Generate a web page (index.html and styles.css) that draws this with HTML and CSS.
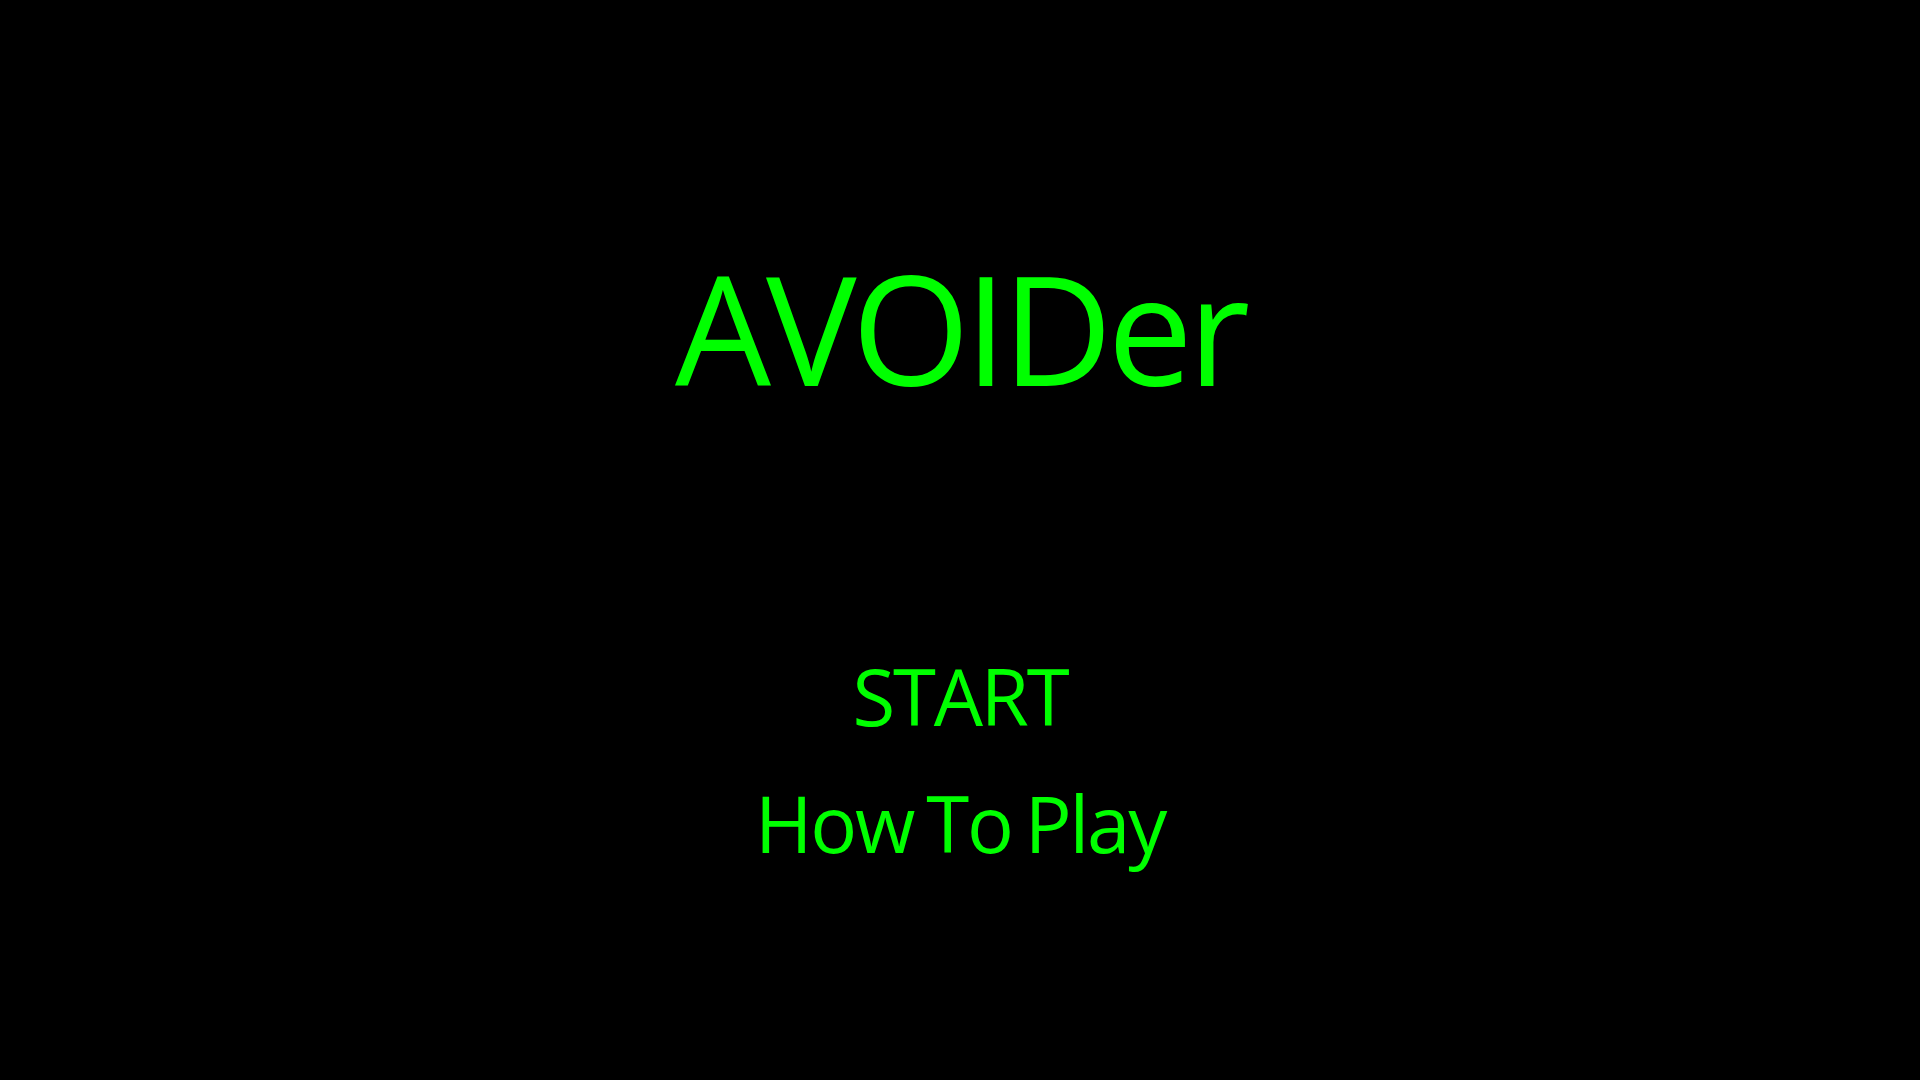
FILE: index.html
```html
<!DOCTYPE html>
<html lang="en">
<head>
<meta charset="utf-8">
<title>AVOIDer</title>
<link rel="stylesheet" href="styles.css">
</head>
<body>
<main class="screen">
  <h1 class="title">AVOIDer</h1>
  <nav class="menu">
    <div class="menu-item">START</div>
    <div class="menu-item">How To Play</div>
  </nav>
</main>
</body>
</html>
```

FILE: styles.css
```css
html, body {
  margin: 0;
  padding: 0;
  background: #000;
  height: 100%;
}
.screen {
  width: 1920px;
  height: 1080px;
  display: flex;
  flex-direction: column;
  align-items: center;
  font-family: "Open Sans", "Noto Sans", sans-serif;
  color: #00ff00;
}
.title {
  margin: 252px 0 0 0;
  font-size: 152px;
  font-weight: 400;
  line-height: 152px;
  letter-spacing: -5px;
}
.menu {
  margin-top: 229px;
  display: flex;
  flex-direction: column;
  align-items: center;
}
.menu-item {
  font-size: 78px;
  line-height: 127px;
  letter-spacing: -2.2px;
  word-spacing: -5px;
  cursor: pointer;
}
```
